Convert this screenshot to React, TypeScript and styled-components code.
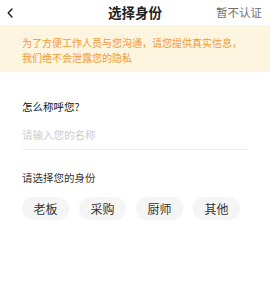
import React from "react";
import styled, { createGlobalStyle } from "styled-components";

const Global = createGlobalStyle`
  html, body { margin: 0; padding: 0; background: #ffffff; }
  body { font-family: "Noto Sans CJK SC", "Noto Sans", sans-serif; }
  * { box-sizing: border-box; }
`;

const Page = styled.div`
  width: 270px;
  min-height: 305px;
  background: #fff;
`;

const Header = styled.div`
  position: relative;
  height: 25px;
  display: flex;
  align-items: center;
  justify-content: space-between;
  padding: 0 8px 0 7px;
`;

const Back = styled.button`
  border: 0;
  background: none;
  padding: 0;
  width: 16px;
  height: 16px;
  display: flex;
  align-items: center;
  color: #222;
`;

const Title = styled.div`
  position: absolute;
  left: 0;
  right: 0;
  top: 0;
  height: 25px;
  line-height: 25px;
  text-align: center;
  font-size: 13.5px;
  font-weight: 700;
  color: #222;
  pointer-events: none;
`;

const Skip = styled.div`
  font-size: 11.5px;
  color: #707070;
  line-height: 25px;
`;

const Banner = styled.div`
  background: #fdf5df;
  color: #ef9a3a;
  font-size: 10px;
  line-height: 15px;
  padding: 10px 22px 7px;
`;

const Section = styled.div`
  padding: 0 22px;
`;

const Label = styled.div<{ $top: number; $strong?: boolean }>`
  margin-top: ${(p) => p.$top}px;
  font-size: 10.5px;
  line-height: 16px;
  color: ${(p) => (p.$strong ? "#111" : "#333")};
`;

const Input = styled.input`
  display: block;
  width: 100%;
  border: 0;
  border-bottom: 1px solid #eeeeee;
  outline: none;
  margin-top: 11px;
  padding: 0 0 7px;
  height: 24px;
  font-family: inherit;
  font-size: 10.5px;
  line-height: 16px;
  color: #333;
  &::placeholder { color: #cccccc; }
`;

const Chips = styled.div`
  display: flex;
  gap: 10px;
  margin-top: 11px;
`;

const Chip = styled.button`
  width: 47px;
  height: 23px;
  border: 0;
  border-radius: 12px;
  background: #f5f5f5;
  color: #333;
  font-family: inherit;
  font-size: 12px;
  padding: 0;
  display: flex;
  align-items: center;
  justify-content: center;
`;

export default function App() {
  return (
    <Page>
      <Global />
      <Header>
        <Back aria-label="返回">
          <svg width="6" height="10" viewBox="0 0 6 10">
            <path d="M5 1 L1.2 5 L5 9" fill="none" stroke="#222" strokeWidth="1.4" strokeLinecap="round" strokeLinejoin="round" />
          </svg>
        </Back>
        <Title>选择身份</Title>
        <Skip>暂不认证</Skip>
      </Header>
      <Banner>
        为了方便工作人员与您沟通，请您提供真实信息，
        <br />
        我们绝不会泄露您的隐私
      </Banner>
      <Section>
        <Label $top={27} $strong>怎么称呼您?</Label>
        <Input placeholder="请输入您的名称" />
        <Label $top={20}>请选择您的身份</Label>
        <Chips>
          {["老板", "采购", "厨师", "其他"].map((t) => (
            <Chip key={t}>{t}</Chip>
          ))}
        </Chips>
      </Section>
    </Page>
  );
}
